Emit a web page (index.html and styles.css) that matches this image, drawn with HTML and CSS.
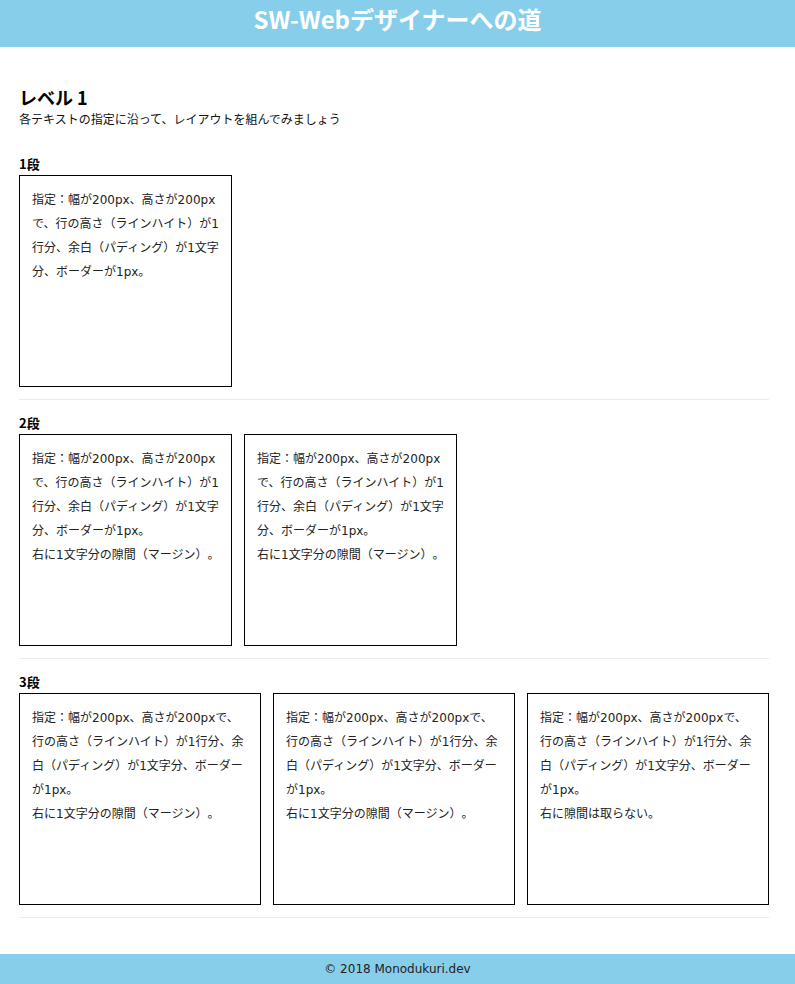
FILE: index.html
```html
<!DOCTYPE html>
<html lang="ja">
<head>
<meta charset="utf-8">
<title>SW-Webデザイナーへの道</title>
<link rel="stylesheet" href="styles.css">
</head>
<body>
<header class="site-header">
  <h1 class="site-title">SW-Webデザイナーへの道</h1>
</header>
<main class="main">
  <h2 class="level-title">レベル 1</h2>
  <p class="lead">各テキストの指定に沿って、レイアウトを組んでみましょう</p>

  <section class="section">
    <h3 class="section-title">1段</h3>
    <div class="row">
      <div class="box box-fixed">指定：幅が200px、高さが200pxで、行の高さ（ラインハイト）が1行分、余白（パディング）が1文字分、ボーダーが1px。</div>
    </div>
  </section>
  <hr class="divider">

  <section class="section">
    <h3 class="section-title">2段</h3>
    <div class="row">
      <div class="box box-fixed">指定：幅が200px、高さが200pxで、行の高さ（ラインハイト）が1行分、余白（パディング）が1文字分、ボーダーが1px。<br>右に1文字分の隙間（マージン）。</div>
      <div class="box box-fixed">指定：幅が200px、高さが200pxで、行の高さ（ラインハイト）が1行分、余白（パディング）が1文字分、ボーダーが1px。<br>右に1文字分の隙間（マージン）。</div>
    </div>
  </section>
  <hr class="divider">

  <section class="section">
    <h3 class="section-title">3段</h3>
    <div class="row">
      <div class="box box-flex">指定：幅が200px、高さが200pxで、行の高さ（ラインハイト）が1行分、余白（パディング）が1文字分、ボーダーが1px。<br>右に1文字分の隙間（マージン）。</div>
      <div class="box box-flex">指定：幅が200px、高さが200pxで、行の高さ（ラインハイト）が1行分、余白（パディング）が1文字分、ボーダーが1px。<br>右に1文字分の隙間（マージン）。</div>
      <div class="box box-flex">指定：幅が200px、高さが200pxで、行の高さ（ラインハイト）が1行分、余白（パディング）が1文字分、ボーダーが1px。<br>右に隙間は取らない。</div>
    </div>
  </section>
  <hr class="divider divider-last">
</main>
<footer class="site-footer">© 2018 Monodukuri.dev</footer>
</body>
</html>
```
FILE: styles.css
```css
* { box-sizing: border-box; }
html, body { margin: 0; padding: 0; }
body {
  font-family: "DejaVu Sans", "Noto Sans CJK JP", sans-serif;
  color: #222;
  background: #fff;
  font-size: 12px;
  text-spacing-trim: space-all;
}
.site-header {
  height: 47px;
  background: #87ceeb;
  text-align: center;
}
.site-title {
  margin: 0;
  font-family: "Noto Sans CJK JP", sans-serif;
  font-size: 24px;
  line-height: 38px;
  font-weight: 700;
  color: #fff;
}
.main {
  width: 769px;
  padding: 38px 0 36px 19px;
}
.level-title {
  margin: 0;
  font-family: "Noto Sans CJK JP", sans-serif;
  font-size: 18px;
  line-height: 24px;
  font-weight: 700;
  color: #000;
}
.lead {
  margin: 0;
  font-family: "Noto Sans CJK JP", sans-serif;
  font-size: 12px;
  line-height: 20px;
  color: #111;
}
.section { margin: 0; }
.main > .section:first-of-type { margin-top: 24px; }
.section-title {
  margin: 0;
  font-family: "Noto Sans CJK JP", sans-serif;
  font-size: 13px;
  line-height: 22px;
  font-weight: 700;
  color: #000;
}
.row {
  display: flex;
  gap: 12px;
}
.box {
  height: 212px;
  border: 1px solid #000;
  padding: 12px 11px 12px 12px;
  font-size: 12px;
  line-height: 24px;
  color: #222;
}
.box-fixed { width: 213px; flex: none; }
.box-flex { flex: 1 1 0; min-width: 0; }
.divider {
  margin: 12px 0;
  border: 0;
  height: 1px;
  background: #ebebeb;
}
.divider-last { margin-bottom: 0; }
.site-footer {
  height: 30px;
  line-height: 30px;
  background: #87ceeb;
  text-align: center;
  font-family: "DejaVu Sans", sans-serif;
  font-size: 12px;
  color: #222;
}
```
